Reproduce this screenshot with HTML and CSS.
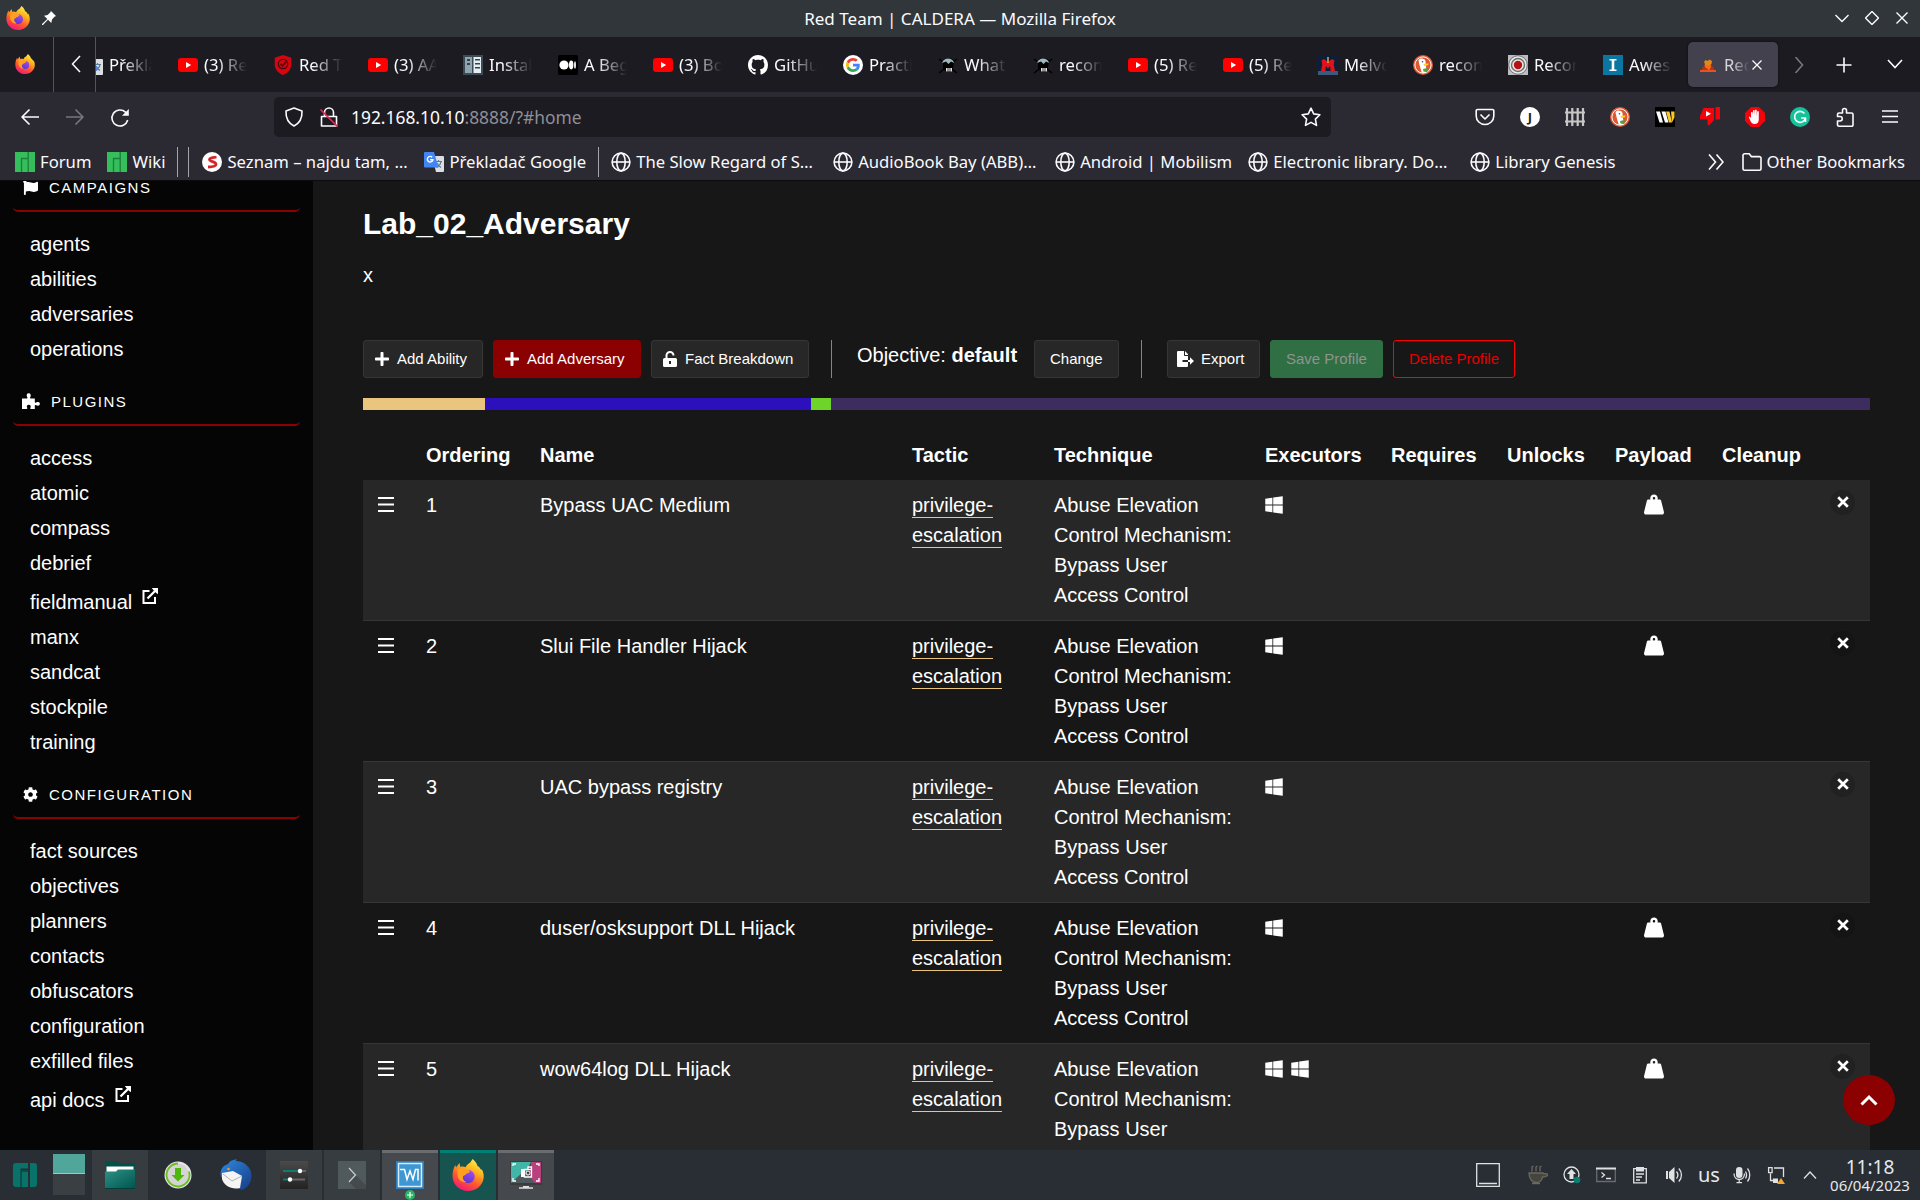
FILE: index.html
```html
<!DOCTYPE html>
<html lang="en">
<head>
<meta charset="utf-8">
<title>Red Team | CALDERA</title>
<link rel="stylesheet" href="styles.css">
</head>
<body>
<svg class="sprite" width="0" height="0" aria-hidden="true">
  <defs>
    <linearGradient id="fx-body" x1=".8" y1="0" x2=".3" y2="1"><stop offset="0" stop-color="#fff44f"/><stop offset=".35" stop-color="#ffb21e"/><stop offset=".65" stop-color="#ff5a2c"/><stop offset="1" stop-color="#f0177a"/></linearGradient>
    <linearGradient id="fx-core" x1=".7" y1="0" x2=".3" y2="1"><stop offset="0" stop-color="#a34cf5"/><stop offset="1" stop-color="#5a35c8"/></linearGradient>
    <linearGradient id="folder-g" x1="0" y1="0" x2="1" y2="1"><stop offset="0" stop-color="#2f9187"/><stop offset="1" stop-color="#00564e"/></linearGradient>
    <linearGradient id="dark-g" x1="0" y1="0" x2="0" y2="1"><stop offset="0" stop-color="#4a4a4a"/><stop offset="1" stop-color="#232323"/></linearGradient>
    <linearGradient id="bird-g" x1="0" y1="0" x2="1" y2="1"><stop offset="0" stop-color="#2f8be0"/><stop offset="1" stop-color="#173b83"/></linearGradient>
  </defs>
  <symbol id="firefox" viewBox="0 0 32 32"><path fill="url(#fx-body)" d="M20.500 0c2.500 1.900 4.300 4.200 5 6.900 1.800.9 3 2.500 3.700 4.400l.5-1.300c1.700 3 2.300 6 1.900 9.200C30.500 26.500 24.100 32 16 32 7.500 32 .500 25.600.500 17c0-4.500 1.100-8.200 2.900-11.100l.6 2.700L7.500 4l.6 3.800c2.100-.6 4-.3 5.400.4 1-2.300 3.100-3.500 4.500-4.500.9-1 1.700-2.200 2.500-3.700z"/><circle cx="16.200" cy="17.600" r="6.500" fill="url(#fx-core)"/><path fill="#ffa11f" d="M5.500 10.500c3-1.800 6.500-1.400 8.500.2 2.100-.1 3.500.5 4 1.500-.8 1.500-2.500 2.200-3.800 2.600-.8 1.400-2.200 1.900-3.300 2.600-.4 2.500 1 4.900 3.600 5.600-4.500 1-9-2.500-9-7.500z"/></symbol>
  <symbol id="youtube" viewBox="0 0 20 20"><rect y="3" width="20" height="14" rx="3.200" fill="#f00"/><path fill="#fff" d="M8 7l5.200 3L8 13z"/></symbol>
  <symbol id="translate" viewBox="0 0 20 20"><path fill="#dcdfe2" d="M8 4h11a1 1 0 0 1 1 1v14a1 1 0 0 1-1 1h-7z"/><path fill="none" stroke="#5b7894" stroke-width="1.200" d="M11.500 9.500h6.500M14.500 8v1.500M17 9.500c-.5 3-2.500 5-4.500 6M13 11c.8 2 2.500 3.500 4 4.500"/><path fill="#4286f5" d="M1 0h9l4.500 15.500H1a1 1 0 0 1-1-1V1a1 1 0 0 1 1-1z"/><path fill="none" stroke="#fff" stroke-width="1.400" d="M8.200 5.300a2.800 2.800 0 1 0 .7 2.500H6.200"/></symbol>
  <symbol id="redhat" viewBox="0 0 20 20"><path fill="#d4060f" d="M10 0l8.300 2.800v6.500c0 5-3.300 8.800-8.300 10.700C5 18.100 1.700 14.300 1.700 9.300V2.800z"/><circle cx="10" cy="9" r="4.700" fill="none" stroke="#4b070b" stroke-width="1.300"/><path fill="none" stroke="#4b070b" stroke-width="1.500" d="M7.500 9l2 2 3.500-4"/></symbol>
  <symbol id="server" viewBox="0 0 20 20"><path fill="#3b4a54" d="M0 0h20v20H0z"/><path fill="#8fa5b2" d="M2 2h7v16H2z"/><path fill="#e4edf2" d="M10.500 2H18v16h-7.500z"/><path fill="#34444f" d="M4 4h3v2H4zM4 8h3v2H4zM12 4h5v1.500h-5zM12 8h5v1.500h-5zM12 12h5v1.500h-5z"/></symbol>
  <symbol id="medium" viewBox="0 0 20 20"><rect width="20" height="20" rx="1.500" fill="#000"/><circle cx="6" cy="10" r="4.600" fill="#fff"/><ellipse cx="13.200" cy="10" rx="2.200" ry="4.400" fill="#fff"/><ellipse cx="17" cy="10" rx=".9" ry="3.800" fill="#fff"/></symbol>
  <symbol id="github" viewBox="0 0 16 16"><path fill="#fff" d="M8 0C3.580 0 0 3.580 0 8c0 3.540 2.290 6.530 5.470 7.590.4.070.55-.17.55-.38 0-.19-.01-.82-.01-1.490-2.010.37-2.530-.49-2.690-.94-.09-.23-.48-.94-.82-1.130-.28-.15-.68-.52-.01-.53.63-.01 1.080.58 1.230.82.72 1.210 1.870.87 2.330.66.070-.52.28-.87.51-1.070-1.780-.2-3.640-.89-3.640-3.950 0-.87.31-1.590.82-2.150-.08-.2-.36-1.020.08-2.120 0 0 .67-.21 2.200.82.64-.18 1.320-.27 2-.27.68 0 1.360.09 2 .27 1.530-1.040 2.200-.82 2.200-.82.44 1.100.16 1.920.08 2.120.51.56.82 1.270.82 2.150 0 3.070-1.870 3.750-3.650 3.950.29.25.54.73.54 1.480 0 1.070-.01 1.930-.01 2.200 0 .21.15.46.55.38A8.012 8.012 0 0 0 16 8c0-4.420-3.580-8-8-8z"/></symbol>
  <symbol id="google" viewBox="0 0 64 64"><circle cx="32" cy="32" r="32" fill="#fff"/><g transform="translate(9.500 9.500) scale(.94)"><path fill="#ea4335" d="M24 9.500c3.540 0 6.710 1.220 9.210 3.600l6.850-6.850C35.900 2.380 30.470 0 24 0 14.620 0 6.510 5.380 2.560 13.220l7.980 6.190C12.430 13.720 17.740 9.500 24 9.500z"/><path fill="#4285f4" d="M46.980 24.550c0-1.570-.15-3.090-.38-4.550H24v9.020h12.940c-.58 2.960-2.260 5.480-4.780 7.180l7.730 6c4.510-4.180 7.090-10.360 7.090-17.650z"/><path fill="#fbbc05" d="M10.530 28.590c-.48-1.450-.76-2.990-.76-4.590s.27-3.140.76-4.590l-7.980-6.190C.92 16.460 0 20.120 0 24c0 3.880.92 7.540 2.560 10.780l7.970-6.190z"/><path fill="#34a853" d="M24 48c6.480 0 11.930-2.130 15.890-5.810l-7.730-6c-2.150 1.450-4.920 2.300-8.160 2.300-6.260 0-11.570-4.220-13.470-9.910l-7.980 6.190C6.510 42.620 14.620 48 24 48z"/></g></symbol>
  <symbol id="blackarch" viewBox="0 0 20 20"><path fill="none" stroke="#000" stroke-width="1.500" d="M1 4l18 14M19 4L1 18"/><path fill="#000" d="M5 7c0-3 2-4 5-4s6 1 6 4l-1 6-2 4H8l-3-4z"/><path fill="#9db9bf" d="M4 8c1-3 3-4.500 6-4.500S15.500 5 16 8l-3-1.500L10.500 9 8 6.500z"/><path fill="#e8e0dc" d="M8 13h6v3.500H8z"/><path stroke="#000" stroke-width=".7" d="M10 13v4M12 13v4"/></symbol>
  <symbol id="melvor" viewBox="0 0 20 20"><path fill="#0b1f3a" d="M0 0h20v20H0z"/><path fill="#3d5a7b" d="M0 16h20v4H0z"/><path fill="#e1121c" d="M3.500 5.500L6 4l4 3 4-3 2.500 1.500-.8 4 1.300 6.500h-4.500l-.3-5-2.200 2.500L7.800 11l-.3 5H3l1.300-6.500z"/><path stroke="#f5d45e" stroke-width="1.200" d="M10 2v6"/></symbol>
  <symbol id="duck" viewBox="0 0 20 20"><circle cx="10" cy="10" r="10" fill="#de5833"/><circle cx="10" cy="10" r="8.100" fill="none" stroke="#fff" stroke-width="1"/><path fill="#fff" d="M5.500 5.500C6.500 3 11 2.800 12.500 6l.4 4.500.8 6.800c-1.600.7-3.600.8-5 .2L6.500 10z"/><path fill="#fc3" d="M10.500 8.800l5.300-.2-.8 1.600-4 .8z"/><path fill="#51a338" d="M10 14l4.500-1v4.300l-4-.9z"/><circle cx="9.500" cy="6.800" r=".8" fill="#2d4f8e"/></symbol>
  <symbol id="target" viewBox="0 0 20 20"><path fill="#bdbdbd" d="M0 0h20v20H0z"/><circle cx="10" cy="10" r="9.300" fill="#e9e9e9" stroke="#6a6a6a"/><circle cx="10" cy="10" r="6.500" fill="#e9e9e9" stroke="#6c6c6c" stroke-width="1.400"/><circle cx="10" cy="10" r="4.200" fill="#b51212"/></symbol>
  <symbol id="tee" viewBox="0 0 20 20"><path fill="#0b76a0" d="M0 0h20v20H0z"/><path fill="#fff" d="M6.500 4h7v1.500h-2.200v9h2.200V16h-7v-1.500h2.200v-9H6.500z"/></symbol>
  <symbol id="volcano" viewBox="0 0 20 20"><path fill="#b3361c" d="M7 9h6l5 8H2z"/><path fill="#ff6a13" d="M6.500 10c1 2 1 3.500 2.500 3.500s1 2.500 2 2.500.5-3.500 2-3.500L12.500 9h-5z"/><path fill="#e08a1c" d="M6 7l1.500-2L9.500 6l2-1.500L14 6l-.5 3-2 1h-4z"/><path fill="#e8531c" d="M2 15h16v2H2z"/></symbol>
  <symbol id="manjaro-sm" viewBox="0 0 20 20"><path fill="#35bf5c" d="M0 0h20v20H0z"/><path fill="none" stroke="#1f7c3a" stroke-width="1.300" d="M6.500 20V6.500H13M13.200 0v20"/></symbol>
  <symbol id="seznam" viewBox="0 0 20 20"><circle cx="10" cy="10" r="10" fill="#fff"/><path fill="none" stroke="#d8232a" stroke-width="2.800" d="M14.500 5c-3 .6-7 .3-7 2.500s6.500 2 6.500 4.800c0 2.500-4 2.700-8 2.700"/></symbol>
  <symbol id="globe" viewBox="0 0 20 20"><g fill="none" stroke="#fbfbfe" stroke-width="1.600"><circle cx="10" cy="10" r="8.900"/><ellipse cx="10" cy="10" rx="4.200" ry="8.900"/><path d="M1 10h18"/></g></symbol>
  <symbol id="link-out" viewBox="0 0 16 16"><path fill="none" stroke="currentColor" stroke-width="2" d="M7.500 3H1.500v12h11.500V9"/><path fill="none" stroke="currentColor" stroke-width="2.300" d="M5.500 10.500L13 3"/><path fill="currentColor" d="M9.800 0H16v6.200l-2-1.500-2.700-2.700z"/></symbol>
  <symbol id="plus" viewBox="0 0 448 512"><path fill="currentColor" d="M416 208H272V64c0-17.670-14.330-32-32-32h-32c-17.670 0-32 14.330-32 32v144H32c-17.670 0-32 14.330-32 32v32c0 17.670 14.330 32 32 32h144v144c0 17.670 14.330 32 32 32h32c17.670 0 32-14.330 32-32V304h144c17.670 0 32-14.330 32-32v-32c0-17.670-14.330-32-32-32z"/></symbol>
  <symbol id="windows" viewBox="0 0 448 512"><path fill="currentColor" d="M0 93.700l183.600-25.300v177.400H0V93.700zm0 324.600l183.600 25.300V268.400H0v149.900zm203.800 28L448 480V268.400H203.800v177.900zm0-380.600v180.100H448V32L203.800 65.700z"/></symbol>
  <symbol id="weight" viewBox="0 0 512 512"><path fill="currentColor" d="M510.280 445.860l-73.030-292.130c-3.800-15.190-16.440-25.720-30.870-25.720h-60.250c3.570-10.050 5.880-20.720 5.880-32 0-53.020-42.980-96-96-96s-96 42.980-96 96c0 11.280 2.300 21.950 5.880 32h-60.250c-14.430 0-27.080 10.540-30.870 25.720L1.720 445.860C-6.610 479.170 16.380 512 48.030 512h415.950c31.640 0 54.630-32.830 46.300-66.140zM256 128c-17.640 0-32-14.360-32-32s14.360-32 32-32 32 14.360 32 32-14.360 32-32 32z"/></symbol>
  <symbol id="flag" viewBox="0 0 512 512"><path fill="currentColor" d="M349.565 98.783C295.978 98.783 251.721 64 184.348 64c-24.955 0-47.309 4.384-68.045 12.013a55.947 55.947 0 0 0 3.586-23.562C118.117 24.015 94.806 1.206 66.338.048 34.345-1.254 8 24.296 8 56c0 19.026 9.497 35.825 24 45.945V488c0 13.255 10.745 24 24 24h16c13.255 0 24-10.745 24-24v-94.400c28.311-12.064 63.582-22.122 114.435-22.122 53.588 0 97.844 34.783 165.217 34.783 48.169 0 86.667-16.294 122.505-40.858C506.840 359.452 512 349.571 512 339.045v-243.100c0-23.393-24.269-38.870-45.485-29.016-34.338 15.948-76.454 31.854-116.950 31.854z"/></symbol>
  <symbol id="cog" viewBox="0 0 512 512"><path fill="currentColor" d="M487.400 315.700l-42.600-24.600c4.300-23.200 4.300-47 0-70.200l42.600-24.600c4.900-2.800 7.100-8.600 5.500-14-11.100-35.600-30-67.800-54.700-94.600-3.800-4.100-10-5.100-14.800-2.300L380.800 110c-17.900-15.400-38.500-27.300-60.800-35.100V25.800c0-5.600-3.900-10.500-9.400-11.700-36.700-8.200-74.300-7.800-109.200 0-5.500 1.200-9.400 6.100-9.400 11.700V75c-22.200 7.900-42.800 19.800-60.800 35.100L88.700 85.500c-4.900-2.800-11-1.900-14.800 2.300-24.700 26.700-43.600 58.900-54.700 94.600-1.700 5.400.6 11.200 5.500 14L67.300 221c-4.300 23.200-4.300 47 0 70.200l-42.600 24.600c-4.900 2.800-7.100 8.600-5.500 14 11.100 35.600 30 67.800 54.700 94.600 3.800 4.100 10 5.100 14.800 2.300l42.600-24.600c17.900 15.400 38.500 27.300 60.800 35.100v49.200c0 5.600 3.900 10.500 9.400 11.700 36.700 8.200 74.300 7.800 109.200 0 5.500-1.200 9.400-6.100 9.400-11.700v-49.200c22.200-7.900 42.800-19.800 60.800-35.100l42.600 24.600c4.900 2.800 11 1.900 14.800-2.300 24.700-26.700 43.600-58.900 54.700-94.600 1.500-5.500-.7-11.300-5.600-14.100zM256 336c-44.100 0-80-35.900-80-80s35.900-80 80-80 80 35.900 80 80-35.900 80-80 80z"/></symbol>
  <symbol id="puzzle" viewBox="0 0 18 16"><path fill="currentColor" d="M0 5.500h4.800c.9 0 .9-.8.3-1.500C4.300 2.500 4.700.3 6.700.3s2.500 2.200 1.700 3.700c-.6.700-.5 1.500.4 1.500h4v3.300c0 1 .7 1.100 1.400.6 1.600-.9 3.700-.4 3.700 1.400s-2.100 2.300-3.700 1.400c-.7-.5-1.400-.3-1.400.6V16H8.900c-.8 0-.8-.8-.4-1.400.7-1.300.1-2.900-1.700-2.900s-2.400 1.600-1.700 2.900c.4.600.3 1.400-.5 1.400H0z"/></symbol>
  <symbol id="unlock" viewBox="0 0 14 16"><path fill="none" stroke="currentColor" stroke-width="2" d="M3.500 8V4.500a3.500 3.500 0 0 1 7 0"/><path fill="currentColor" fill-rule="evenodd" d="M1.500 7h11A1.500 1.500 0 0 1 14 8.500v6a1.500 1.500 0 0 1-1.500 1.500h-11A1.500 1.500 0 0 1 0 14.500v-6A1.500 1.500 0 0 1 1.500 7zm4.500 3v3h2v-3z"/></symbol>
  <symbol id="export" viewBox="0 0 17 16"><path fill="currentColor" fill-rule="evenodd" d="M0 1a1 1 0 0 1 1-1h6v4.200c0 .5.300.8.800.8H11v4H5.500v2H11v4a1 1 0 0 1-1 1H1a1 1 0 0 1-1-1z"/><path fill="currentColor" d="M8 0l3 3.300V4H8zM11 9h2V6.200L17 10l-4 3.800V11h-2z"/></symbol>
  <symbol id="times" viewBox="0 0 12 12"><path fill="none" stroke="currentColor" stroke-width="2.700" d="M1.200 1.200l9.600 9.600M10.800 1.200L1.200 10.800"/></symbol>
  <symbol id="grip" viewBox="0 0 16 16"><path fill="currentColor" d="M0 0h16v2H0zM0 6.500h16v2H0zM0 13h16v2H0z"/></symbol>
</svg>

<header class="titlebar">
  <div class="titlebar-side"><svg class="app-icon"><use href="#firefox"/></svg>
    <svg class="pin" viewBox="0 0 14 14"><path fill="#fcfcfc" d="M9 0l5 5-1.500.8-2.500 2.700-.7 3.500L6 8.700 1 14l-1 0 0-1 5.300-5L2 4.700 5.500 4l2.700-2.500z"/></svg></div>
  <h1 class="window-title">Red Team | CALDERA — Mozilla Firefox</h1>
  <div class="titlebar-side window-buttons">
    <svg viewBox="0 0 14 14"><path d="M.5 4L7 10.500 13.500 4"/></svg>
    <svg viewBox="0 0 14 14"><path d="M7 .5L13.500 7 7 13.500.5 7z"/></svg>
    <svg viewBox="0 0 14 14"><path d="M1.500 1.500l11 11M12.500 1.500l-11 11"/></svg>
  </div>
</header>

<nav class="tabbar">
  <div class="pinned"><svg class="fav"><use href="#firefox"/></svg></div>
  <div class="scroll-left"><svg viewBox="0 0 10 18"><path d="M9 1L1.500 9 9 17"/></svg></div>
  <div class="tabs">
    <div class="tab"><svg class="fav"><use href="#translate"/></svg><span>Překla</span></div>
    <div class="tab"><svg class="fav"><use href="#youtube"/></svg><span>(3) Re</span></div>
    <div class="tab"><svg class="fav"><use href="#redhat"/></svg><span>Red T</span></div>
    <div class="tab"><svg class="fav"><use href="#youtube"/></svg><span>(3) AA</span></div>
    <div class="tab"><svg class="fav"><use href="#server"/></svg><span>Instal</span></div>
    <div class="tab"><svg class="fav"><use href="#medium"/></svg><span>A Beg</span></div>
    <div class="tab"><svg class="fav"><use href="#youtube"/></svg><span>(3) Bo</span></div>
    <div class="tab"><svg class="fav"><use href="#github"/></svg><span>GitHu</span></div>
    <div class="tab"><svg class="fav"><use href="#google"/></svg><span>Practi</span></div>
    <div class="tab"><svg class="fav"><use href="#blackarch"/></svg><span>What</span></div>
    <div class="tab"><svg class="fav"><use href="#blackarch"/></svg><span>recon</span></div>
    <div class="tab"><svg class="fav"><use href="#youtube"/></svg><span>(5) Re</span></div>
    <div class="tab"><svg class="fav"><use href="#youtube"/></svg><span>(5) Re</span></div>
    <div class="tab"><svg class="fav"><use href="#melvor"/></svg><span>Melvo</span></div>
    <div class="tab"><svg class="fav"><use href="#duck"/></svg><span>recon</span></div>
    <div class="tab"><svg class="fav"><use href="#target"/></svg><span>Recon</span></div>
    <div class="tab"><svg class="fav"><use href="#tee"/></svg><span>Awes</span></div>
    <div class="tab active"><svg class="fav"><use href="#volcano"/></svg><span>Red</span><svg class="tab-close" viewBox="0 0 12 12"><path d="M1.500 1.500l9 9M10.500 1.500l-9 9"/></svg></div>
  </div>
  <div class="tab-tools">
    <svg class="dim" viewBox="0 0 16 16"><path d="M4.500 0l7 8-7 8"/></svg>
    <svg viewBox="0 0 16 16"><path d="M8 .500v15M.500 8h15"/></svg>
    <svg class="list-all" viewBox="0 0 16 16"><path d="M1 4l7 7.500L15 4"/></svg>
  </div>
</nav>

<div class="navbar">
  <div class="nav-buttons">
    <svg viewBox="0 0 20 20"><path d="M19 10H2M9.500 2.500L2 10l7.500 7.500"/></svg>
    <svg class="dim" viewBox="0 0 20 20"><path d="M1 10h17M10.500 2.500L18 10l-7.500 7.500"/></svg>
    <svg class="reload" viewBox="0 0 20 20"><path d="M17.700 12A8 8 0 1 1 15.500 4.200L18 6.500"/><path class="solid" d="M18.800 1v6.800H12z"/></svg>
  </div>
  <div class="urlbar">
    <svg viewBox="0 0 20 20"><path d="M10 1l8 3c.3 6.500-2 12-8 15C4 16 1.700 10.500 2 4z"/></svg>
    <svg viewBox="0 0 20 20"><path d="M5.500 9V5.500a4.500 4.500 0 0 1 9 0V9M2.500 9.500h15V19h-15z"/><path class="strike" d="M1.500 2.500l17 17"/></svg>
    <span class="url">192.168.10.10<span class="url-rest">:8888/?#home</span></span>
    <svg class="star" viewBox="0 0 20 20"><path d="M10 1.200l2.700 5.700 6.200.8-4.500 4.400 1.100 6.300L10 15.400l-5.500 3 1.100-6.300L1.100 7.700l6.200-.8z"/></svg>
  </div>
  <div class="extensions">
    <svg viewBox="0 0 20 20"><path d="M2.500 2.500h15a1.300 1.300 0 0 1 1.300 1.300V9a8.800 8.500 0 0 1-17.600 0V3.800A1.300 1.300 0 0 1 2.500 2.500zM5.500 7.500L10 12l4.500-4.500"/></svg>
    <span class="badge-j">J</span>
    <svg viewBox="0 0 20 20"><path class="fence" d="M2 1v18M7.300 1v18M12.700 1v18M18 1v18M0 5.500h20M0 14.500h20"/></svg>
    <svg viewBox="0 0 20 20"><use href="#duck"/></svg>
    <svg viewBox="0 0 20 20"><path class="solid black" d="M0 0h20v20H0z"/><path class="solid" d="M1 4.500h4l3 11H4.500zM6.500 4.500h4l3 11H10z"/><path class="solid yellow" d="M11 4.500h3.500l2.500 11h-3zM16 4.500h3.500v6L17 15.500z"/></svg>
    <svg viewBox="0 0 20 20"><path class="solid red" d="M3.500 1H14v12l-5 5.500-1.500-1V12.500H0V9zM15.500 0H20v12.500h-4.500z"/><path class="solid" d="M6 4l5 2.800-5 2.800z"/></svg>
    <svg viewBox="0 0 20 20"><path class="solid red" d="M6 0h8l6 6v8l-6 6H6l-6-6V6z"/><path class="solid" d="M6 5.500q1-1 1.700 0V9l.3-5.500q.9-1 1.700 0V9l.3-6q.9-1 1.700 0V9l.5-4.500q.9-.9 1.600 0v8c0 3-2 4.500-4 4.500-2.500 0-3.800-1.500-5-4.500l-1-2.500q.8-.8 1.500 0L6 11z"/></svg>
    <svg viewBox="0 0 20 20"><circle class="solid green" cx="10" cy="10" r="10"/><path d="M14.500 6.500A5.500 5.500 0 1 0 15.500 11H11M15.500 11v4"/></svg>
    <svg viewBox="0 0 20 20"><path d="M7.500 6V3.500a2 2 0 0 1 4 0V6h5a1.500 1.500 0 0 1 1.500 1.500V18a1.200 1.200 0 0 1-1.200 1.200H4A1.500 1.500 0 0 1 2.500 18v-4H5a2 2 0 0 0 0-4.500H2.500v-2A1.500 1.500 0 0 1 4 6z"/></svg>
    <svg viewBox="0 0 20 20"><path d="M2 4h16M2 9.500h16M2 15h16"/></svg>
  </div>
</div>

<div class="bookmarks">
  <a><svg class="fav"><use href="#manjaro-sm"/></svg>Forum</a>
  <a><svg class="fav"><use href="#manjaro-sm"/></svg>Wiki</a>
  <i class="sep first"></i><i class="sep second"></i>
  <a><svg class="fav"><use href="#seznam"/></svg><span class="cut">Seznam – najdu tam, …</span></a>
  <a><svg class="fav"><use href="#translate"/></svg>Překladač Google</a>
  <i class="sep third"></i>
  <a><svg class="fav"><use href="#globe"/></svg><span class="cut">The Slow Regard of S…</span></a>
  <a><svg class="fav"><use href="#globe"/></svg><span class="cut">AudioBook Bay (ABB)…</span></a>
  <a><svg class="fav"><use href="#globe"/></svg>Android | Mobilism</a>
  <a><svg class="fav"><use href="#globe"/></svg><span class="cut">Electronic library. Do…</span></a>
  <a><svg class="fav"><use href="#globe"/></svg>Library Genesis</a>
  <svg class="more" viewBox="0 0 16 16"><path d="M1 .500L7.500 8 1 15.500M8.500.500L15 8l-6.500 7.500"/></svg>
  <a class="last"><svg class="fav" viewBox="0 0 20 20"><path d="M1 16.500v-13A1.700 1.700 0 0 1 2.700 1.800h4.500l2.200 2.800h7.900A1.700 1.700 0 0 1 19 6.300v10.200a1.700 1.700 0 0 1-1.700 1.700H2.700A1.700 1.700 0 0 1 1 16.500z"/></svg>Other Bookmarks</a>
</div>

<div class="page">
  <aside class="sidebar">
    <h2 class="label"><svg><use href="#flag"/></svg>CAMPAIGNS</h2>
    <ul>
      <li>agents</li><li>abilities</li><li>adversaries</li><li>operations</li>
    </ul>
    <h2 class="label wide"><svg><use href="#puzzle"/></svg>PLUGINS</h2>
    <ul>
      <li>access</li><li>atomic</li><li>compass</li><li>debrief</li>
      <li class="external">fieldmanual<svg><use href="#link-out"/></svg></li>
      <li>manx</li><li>sandcat</li><li>stockpile</li><li>training</li>
    </ul>
    <h2 class="label"><svg><use href="#cog"/></svg>CONFIGURATION</h2>
    <ul>
      <li>fact sources</li><li>objectives</li><li>planners</li><li>contacts</li><li>obfuscators</li><li>configuration</li><li>exfilled files</li>
      <li class="external">api docs<svg><use href="#link-out"/></svg></li>
    </ul>
  </aside>

  <main class="content">
    <h2 class="profile-name">Lab_02_Adversary</h2>
    <p class="profile-desc">x</p>
    <div class="toolbar">
      <button class="btn b-ability"><svg><use href="#plus"/></svg>Add Ability</button>
      <button class="btn b-adversary"><svg><use href="#plus"/></svg>Add Adversary</button>
      <button class="btn b-fact"><svg><use href="#unlock"/></svg>Fact Breakdown</button>
      <i class="rule"></i>
      <p class="objective">Objective: <b>default</b></p>
      <button class="btn b-change">Change</button>
      <i class="rule"></i>
      <button class="btn b-export"><svg><use href="#export"/></svg>Export</button>
      <button class="btn b-save">Save Profile</button>
      <button class="btn b-delete">Delete Profile</button>
    </div>
    <div class="phases"><i class="p1"></i><i class="p2"></i><i class="p3"></i><i class="p4"></i></div>
    <table class="abilities">
      <colgroup><col class="c-grip"><col class="c-order"><col class="c-name"><col class="c-tactic"><col class="c-tech"><col class="c-exec"><col class="c-req"><col class="c-unl"><col class="c-pay"><col></colgroup>
      <thead><tr><th></th><th>Ordering</th><th>Name</th><th>Tactic</th><th>Technique</th><th>Executors</th><th>Requires</th><th>Unlocks</th><th>Payload</th><th>Cleanup</th></tr></thead>
      <tbody>
        <tr><td><svg class="grip"><use href="#grip"/></svg></td><td>1</td><td>Bypass UAC Medium</td><td><span class="tactic">privilege-escalation</span></td><td>Abuse Elevation Control Mechanism: Bypass User Access Control</td><td><svg class="win"><use href="#windows"/></svg></td><td></td><td></td><td class="payload"><svg><use href="#weight"/></svg></td><td class="remove"><span><svg><use href="#times"/></svg></span></td></tr>
        <tr><td><svg class="grip"><use href="#grip"/></svg></td><td>2</td><td>Slui File Handler Hijack</td><td><span class="tactic">privilege-escalation</span></td><td>Abuse Elevation Control Mechanism: Bypass User Access Control</td><td><svg class="win"><use href="#windows"/></svg></td><td></td><td></td><td class="payload"><svg><use href="#weight"/></svg></td><td class="remove"><span><svg><use href="#times"/></svg></span></td></tr>
        <tr><td><svg class="grip"><use href="#grip"/></svg></td><td>3</td><td>UAC bypass registry</td><td><span class="tactic">privilege-escalation</span></td><td>Abuse Elevation Control Mechanism: Bypass User Access Control</td><td><svg class="win"><use href="#windows"/></svg></td><td></td><td></td><td></td><td class="remove"><span><svg><use href="#times"/></svg></span></td></tr>
        <tr><td><svg class="grip"><use href="#grip"/></svg></td><td>4</td><td>duser/osksupport DLL Hijack</td><td><span class="tactic">privilege-escalation</span></td><td>Abuse Elevation Control Mechanism: Bypass User Access Control</td><td><svg class="win"><use href="#windows"/></svg></td><td></td><td></td><td class="payload"><svg><use href="#weight"/></svg></td><td class="remove"><span><svg><use href="#times"/></svg></span></td></tr>
        <tr><td><svg class="grip"><use href="#grip"/></svg></td><td>5</td><td>wow64log DLL Hijack</td><td><span class="tactic">privilege-escalation</span></td><td>Abuse Elevation Control Mechanism: Bypass User</td><td><svg class="win"><use href="#windows"/></svg><svg class="win"><use href="#windows"/></svg></td><td></td><td></td><td class="payload"><svg><use href="#weight"/></svg></td><td class="remove"><span><svg><use href="#times"/></svg></span></td></tr>
      </tbody>
    </table>
  </main>
  <div class="to-top"><svg viewBox="0 0 18 12"><path d="M1.500 10.500L9 3l7.500 7.500"/></svg></div>
</div>

<footer class="taskbar">
  <div class="menu"><svg viewBox="0 0 24 24"><path fill="#0a7369" d="M3 0h12v5.500H7.500V24H3a3 3 0 0 1-3-3V3a3 3 0 0 1 3-3zM9 9h6v15H9zM17 0h4a3 3 0 0 1 3 3v18a3 3 0 0 1-3 3h-4z"/><path fill="#0b4f4b" d="M7.500 7H15v2H9v15H7.500z"/></svg></div>
  <div class="pager"><i class="on"></i><i></i></div>
  <div class="task idle"><svg class="w30" viewBox="0 0 30 28"><path fill="#004f48" d="M0 1a1 1 0 0 1 1-1h11l2 2.500h16V14H0z"/><path fill="#fff" d="M1.500 5.500h27V12h-27z"/><path fill="url(#folder-g)" d="M0 10.500h11l2-2h17V27H0z"/><path fill="#003f3a" d="M0 27h30v1H0z"/></svg></div>
  <div class="task"><svg viewBox="0 0 28 28"><circle cx="14" cy="14" r="13.500" fill="#e6e6e6"/><circle cx="14" cy="14" r="11.300" fill="#d4d4d4"/><path fill="none" stroke="#67bf1c" stroke-width="1.800" d="M14 2.500a11.500 11.500 0 1 0 11 8"/><path fill="#4cb80c" d="M11 7h6v7h3.500L14 20.500 7.500 14H11z"/></svg></div>
  <div class="task"><svg class="w32" viewBox="0 0 32 32"><path fill="url(#bird-g)" d="M8 5C10 1.500 13 .5 17 .2L15.500 2C24 2 31.500 8 31.500 17c-.2 7-4 12-9.500 14l-6-3L1 18C-.5 12 2 7 8 5z"/><path fill="#f4f4f4" d="M2 14l11-2 9 5-2 12c-8 2-16-2-18-9z"/><path fill="none" stroke="#b5b5b5" d="M3 15l9 7 10-5"/><circle cx="8.500" cy="10" r="1.300" fill="#f09a2a"/></svg></div>
  <div class="task idle"><svg viewBox="0 0 28 28"><path fill="url(#dark-g)" d="M0 0h28v28H0z"/><path stroke="#0b7d71" stroke-width="2" d="M3 10h16M3 18.500h6"/><path stroke="#666" stroke-width="2" d="M22 10h4M11 18.500h14"/><circle cx="20" cy="10" r="2.200" fill="#fff"/><circle cx="10" cy="18.500" r="2.200" fill="#fff"/></svg></div>
  <div class="task idle"><svg viewBox="0 0 28 28"><path fill="#50595b" d="M0 0h28v28H0z"/><path fill="#454b4d" d="M17.500 14L28 24.500V28H18l-7-7z"/><path fill="none" stroke="#c5cbcd" stroke-width="1.300" d="M11 7l6.500 7-6.500 7"/></svg></div>
  <div class="task open"><svg viewBox="0 0 28 28"><path fill="#2a7fc1" d="M0 0h28v28H0z"/><path fill="#3c97d3" stroke="#d8ecf8" stroke-width="1.500" d="M2.500 2.500h23v23h-23z"/><path fill="none" stroke="#fff" stroke-width="1.500" d="M4 8.500h4.500l2.500 10 3-8.500 3 8.500L19.500 8.500H22v11"/></svg><b class="plus-badge"><svg viewBox="0 0 10 10"><circle cx="5" cy="5" r="5" fill="#27b463"/><path stroke="#fff" stroke-width="1.200" d="M5 2v6M2 5h6"/></svg></b></div>
  <div class="task current"><svg class="w32" viewBox="0 0 32 32"><use href="#firefox"/></svg></div>
  <div class="task open"><svg class="w32" viewBox="0 0 32 28"><path fill="#3b3b3b" d="M0 0h32v24H0z"/><path fill="#41b5a8" d="M1 1h20L11 22H1z"/><path fill="#b8407c" d="M21 1h10v21H19z"/><path fill="#505a5e" d="M1 22L15 9l10 13z"/><path fill="none" stroke="#fff" stroke-width="1.300" d="M3 5V3h3M26 3h3v2M3 17v3h3M26 20h3v-3M14.500 8.500h7v7.500h-7zM18 8V6h3.500v2"/><path fill="#fff" d="M11 8h3v8h-3z"/><circle cx="18" cy="12" r="2" fill="none" stroke="#fff"/><path fill="#ddd" d="M13 25h6v1.300h4v1.500H9v-1.500h4z"/></svg></div>

  <div class="tray">
    <svg class="desk" viewBox="0 0 24 24"><path d="M.7.700h22.600v22.600H.7zM3 20.500h18"/></svg>
    <svg class="cup" viewBox="0 0 20 20"><path class="cup-body" d="M1 8h14c0 2 4-.5 4.500 1.500S16 12 14.500 12c-.5 3-3 5.500-6.500 5.500S1 14 1 8zM4 18.500h8"/><path class="steam" d="M4 6.500V2l1.500-1M8 6.500V2l1.500-1M12 6.500V2l1.500-1"/></svg>
    <svg viewBox="0 0 20 20"><circle cx="9.500" cy="9.500" r="7.500"/><path class="solid" d="M9.500 4l4.500 5h-2.500v5h-4V9H5z"/><circle cx="15" cy="15" r="3.300" class="teal"/></svg>
    <svg viewBox="0 0 20 20"><path class="faint" d="M.7 4v12.500h18.600V4"/><path class="thick" d="M0 3.500h20"/><path d="M5.500 7.500l3 2.500-3 2.500M10 13.500h5"/></svg>
    <svg viewBox="0 0 20 20"><path d="M3.700 3.700h12.600v14.100H3.700zM6 9h8M6 12h6M6 15h4"/><path class="solid" d="M6 2h8v4.500H6z"/></svg>
    <svg viewBox="0 0 20 20"><path class="solid" d="M2 6h2v8H2zM5 7l5.500-5v16L5 13z"/><path d="M12.500 6.500c1.600 2 1.600 5 0 7M14.800 3.500c3.500 3.500 3.500 9.500 0 13"/></svg>
    <span class="kbd">us</span>
    <svg viewBox="0 0 20 20"><rect class="solid" x="4" y="2" width="6.500" height="11" rx="3.200"/><path d="M2 8.500c0 8 10.500 8 10.500 0M7.200 14v3.500M4.500 17.700h5.500M13.500 6.500c1.200 2 1.200 5 0 7M15.500 3.500c3 3.500 3 9.500 0 13"/></svg>
    <svg viewBox="0 0 20 20"><path d="M8 3h9.500v9M4.500 8.500v7H9M2.600 2.600h3.500v5H2.600z"/><path class="solid" d="M7 13.500h5v4.500H7z"/><path class="warn" d="M15 13l4 6h-8z"/></svg>
    <svg viewBox="0 0 20 20"><path d="M4 13.500L10 7l6 6.500"/></svg>
  </div>
  <div class="clock"><span class="time">11:18</span><span class="date">06/04/2023</span></div>
</footer>
</body>
</html>
```
FILE: styles.css
```css
* { box-sizing: border-box; }
body {
  margin: 0;
  width: 1920px;
  height: 1200px;
  overflow: hidden;
  display: flex;
  flex-direction: column;
  background: #171717;
  color: #fbfbfe;
  font: 16.67px/20px "Noto Sans", sans-serif;
}
h1, h2, p, ul { margin: 0; padding: 0; font-weight: normal; }
svg { display: block; flex: none; }
.sprite { height: 0; }
.fav { width: 20px; height: 20px; }

/* window title */
.titlebar {
  height: 37px; flex: none;
  display: grid; grid-template-columns: 200px 1fr 200px; align-items: center;
  background: #30363a;
}
.titlebar-side { display: flex; align-items: center; }
.app-icon { width: 24px; height: 24px; margin-left: 6px; margin-top: -1px; }
.pin { width: 14px; height: 14px; margin-left: 12px; margin-top: -1px; }
.window-title { font-size: 17.050px; text-align: center; }
.window-buttons { justify-content: flex-end; gap: 16px; padding: 0 11px 1px 0; }
.window-buttons svg { width: 14px; height: 14px; fill: none; stroke: #fcfcfc; stroke-width: 1.400; }

/* tabs */
.tabbar { height: 55px; flex: none; display: flex; background: #1c1b22; }
.pinned { width: 54px; padding: 17px 0 0 15px; border-right: 1px solid #55545b; }
.scroll-left { width: 42px; padding: 18px 0 0 17px; border-right: 1px solid #55545b; }
.scroll-left svg { width: 10px; height: 18px; fill: none; stroke: #fbfbfe; stroke-width: 1.500; }
.tabs { width: 1684px; display: flex; align-items: center; overflow: hidden; }
.tab { width: 90px; height: 45px; flex: none; margin-right: 5px; padding: 0 6px 0 10px; display: flex; align-items: center; gap: 6px; border-radius: 5px; }
.tab:first-child { margin-left: -23px; }
.tab span { width: 44px; overflow: hidden; white-space: nowrap; -webkit-mask-image: linear-gradient(to right, #000 30%, transparent 98%); mask-image: linear-gradient(to right, #000 30%, transparent 98%); }
.tab.active { background: #42414d; box-shadow: 0 0 3px #0c0c0d; }
.tab.active span { width: 26px; opacity: .8; }
.tab-close { width: 12px; height: 12px; margin-left: -5px; fill: none; stroke: #fbfbfe; stroke-width: 1.300; }
.tab-tools { display: flex; align-items: center; gap: 29px; padding-left: 11px; }
.tab-tools svg { width: 16px; height: 16px; fill: none; stroke: #fbfbfe; stroke-width: 1.600; }
.tab-tools .dim { stroke: #77767e; }
.tab-tools .list-all { margin: -2px 0 0 6px; }

/* address row */
.navbar { height: 50px; flex: none; display: flex; align-items: center; background: #2b2a33; }
.nav-buttons { width: 274px; padding-left: 20px; display: flex; gap: 25px; }
.nav-buttons .reload { margin-top: 1px; }
.navbar svg { width: 20px; height: 20px; fill: none; stroke: #fbfbfe; stroke-width: 1.600; stroke-linejoin: round; }
.navbar svg .solid { fill: #fbfbfe; stroke: none; }
.navbar svg .black { fill: #000; }
.navbar svg .yellow { fill: #f7c72c; }
.navbar svg .red { fill: #f2040a; }
.navbar svg .green { fill: #15c39a; }
.navbar svg.dim { stroke: #77767e; }
.navbar .strike { stroke: #e22850; stroke-width: 1.700; }
.navbar .fence { stroke: #c6c6c6; stroke-width: 2.200; }
.navbar use { stroke: none; }
.urlbar { width: 1057px; height: 40px; display: flex; align-items: center; padding: 0 10px; gap: 15px; background: #1c1b22; border-radius: 5px; }
.url { flex: 1; margin-left: -3px; font-size: 17.400px; }
.url-rest { color: #8f8f96; }
.extensions { margin-left: 144px; display: flex; gap: 25px; }
.badge-j { width: 20px; height: 20px; border-radius: 50%; background: #fff; color: #222; font: bold 13px/20px "Noto Sans", sans-serif; text-align: center; }

/* bookmarks */
.bookmarks { height: 39px; flex: none; display: flex; align-items: center; padding: 1px 15px 0; background: #2b2a33; border-bottom: 1px solid #0c0c0d; }
.bookmarks a { display: flex; align-items: center; gap: 5px; margin-right: 16px; white-space: nowrap; }
.bookmarks .cut { width: 181px; }
.sep { width: 1px; height: 30px; background: #a5a4aa; }
.sep.first { margin: 0 10px 0 -4px; }
.sep.second { margin-right: 13px; }
.sep.third { margin: 0 12px 0 -4px; }
.more { width: 16px; height: 16px; margin-left: auto; margin-right: 18px; fill: none; stroke: #fbfbfe; stroke-width: 1.600; }
.bookmarks a.last { margin-right: 0; }
.last svg { fill: none; stroke: #fbfbfe; stroke-width: 1.600; }

/* CALDERA page */
.page { position: relative; height: 969px; flex: none; display: flex; overflow: hidden; color: #fff; font: 20px/30px "Liberation Sans", Arial, sans-serif; }
.sidebar { width: 313px; background: #050505; flex: none; }
.label { height: 59px; margin: 0 13px; padding: 0 0 11px 10px; display: flex; align-items: flex-end; gap: 11px; font-size: 15px; line-height: 22px; letter-spacing: 1.500px; border-bottom: 2px solid #8b0000; border-radius: 5px; }
.label:first-child { margin-top: -28px; }
.label svg { width: 15px; height: 15px; margin-bottom: 4px; }
.label.wide { padding-left: 9px; }
.label.wide svg { width: 18px; height: 16px; }
.sidebar ul { list-style: none; padding: 15px 0 0 30px; }
.sidebar li { height: 35px; line-height: 35px; }
.sidebar .external { display: flex; height: 39px; padding-top: 4px; }
.external svg { width: 16px; height: 16px; margin: 3px 0 0 10px; }

.content { width: 1557px; flex: none; padding: 26px 0 0 50px; }
.profile-name { font-size: 30px; font-weight: bold; line-height: 34px; }
.profile-desc { margin: 19px 0 50px; }
.toolbar { display: flex; height: 38px; }
.btn { height: 38px; margin: 0 10px 0 0; padding: 0 0 2px 10px; display: flex; align-items: center; gap: 8px; font: 15px "Liberation Sans", Arial, sans-serif; color: #fff; background: #272727; border: 1px solid #363636; border-radius: 3px; white-space: nowrap; }
.btn svg { width: 14px; height: 16px; margin-top: 1px; }
.b-ability { width: 120px; padding-left: 11px; }
.b-adversary { width: 148px; padding-left: 11px; background: #8b0000; border-color: #8b0000; }
.b-fact { width: 158px; margin-right: 22px; padding-left: 11px; }
.b-change { width: 85px; padding-left: 15px; margin-right: 22px; }
.b-export { width: 93px; gap: 7px; padding-left: 9px; }
.b-export svg { width: 17px; }
.b-save { width: 113px; padding-left: 15px; color: #8f948f; background: #306e43; border-color: #306e43; }
.b-delete { width: 122px; padding-left: 15px; color: #e60000; background: none; border-color: #f00; }
.rule { width: 1px; background: #858585; margin-right: 25px; }
.objective { width: 177px; }
.phases { display: flex; height: 12px; margin: 20px 0; }
.p1 { width: 122px; background: #e9c57e; }
.p2 { width: 326px; background: #2c10bc; }
.p3 { width: 20px; background: #6fd42a; }
.p4 { flex: 1; background: #3d2d5f; }

.abilities { width: 1507px; table-layout: fixed; border-collapse: separate; border-spacing: 0; }
.c-grip { width: 48px; } .c-order { width: 114px; } .c-name { width: 372px; }
.c-tactic { width: 142px; } .c-tech { width: 211px; } .c-exec { width: 126px; }
.c-req { width: 116px; } .c-unl { width: 108px; } .c-pay { width: 107px; }
.abilities th { padding: 10px 15px; text-align: left; font-weight: bold; }
.abilities td { height: 141px; padding: 10px 15px; vertical-align: top; border-bottom: 1px solid #363636; }
.abilities tbody tr:nth-child(odd) { background: #272727; }
.tactic { padding-bottom: 1px; border-bottom: 1px solid #e9c57e; }
.abilities .grip { width: 16px; height: 16px; margin-top: 7px; }
.abilities .win { display: inline-block; width: 18px; height: 20px; margin: 5px 8px 0 0; vertical-align: top; }
.payload svg { width: 20px; height: 21px; margin: 4px auto 0; }
.remove span { width: 25px; height: 25px; margin-left: auto; display: grid; place-items: center; border-radius: 50%; background: rgba(10, 10, 10, .2); }
.remove svg { width: 12px; height: 12px; margin-top: -1px; }
.to-top { position: absolute; left: 1843px; top: 894px; width: 52px; height: 50px; border-radius: 50%; background: #8b0000; display: grid; place-items: center; }
.to-top svg { width: 18px; height: 12px; fill: none; stroke: #fff; stroke-width: 3; }

/* desktop panel */
.taskbar { height: 50px; flex: none; display: flex; background: #292e35; color: #e6e8ea; }
.menu { width: 53px; padding: 13px 0 0 13px; }
.menu svg { width: 24px; height: 24px; }
.pager { width: 32px; margin: 4px 7px 0 0; }
.pager i { display: block; height: 21px; background: #3a3f43; }
.pager .on { height: 20px; background: #50a69b; border-bottom: 1px solid #8fd0c6; }
.task { position: relative; width: 56px; margin-right: 2px; display: grid; place-items: center; }
.task svg { width: 28px; height: 28px; }
.task .w30 { width: 30px; }
.task .w32 { width: 32px; height: 32px; }
.task.idle { background: #373c40; }
.task.open { background: #45494e; border-top: 3px solid #6a6d70; padding-bottom: 3px; }
.task.current { background: #17534f; border-top: 3px solid #008074; padding-bottom: 4px; }
.task.open .w32 { height: 28px; }
.plus-badge { position: absolute; left: 23px; bottom: 0; }
.task .plus-badge svg { width: 10px; height: 10px; }
.tray { margin-left: auto; display: flex; align-items: center; gap: 14px; }
.tray svg { width: 20px; height: 20px; fill: none; stroke: #dfe1e3; stroke-width: 1.300; }
.tray .desk { width: 24px; height: 24px; margin-right: 14px; }
.tray .solid { fill: #dfe1e3; stroke: none; }
.tray .teal { fill: #0b7d71; stroke: none; }
.tray .warn { fill: #f6a72c; stroke: none; }
.tray .faint { stroke: #666b70; }
.tray .thick { stroke-width: 2; }
.tray .cup-body { fill: #45443f; stroke: #6c6860; }
.tray .steam { stroke: #6c6860; }
.kbd { width: 20px; font-size: 20px; }
.clock { width: 100px; padding: 6px 0 0; display: flex; flex-direction: column; align-items: center; }
.time { font-size: 19px; line-height: 23px; }
.date { font-size: 15px; line-height: 17px; margin-top: -2px; }
```
